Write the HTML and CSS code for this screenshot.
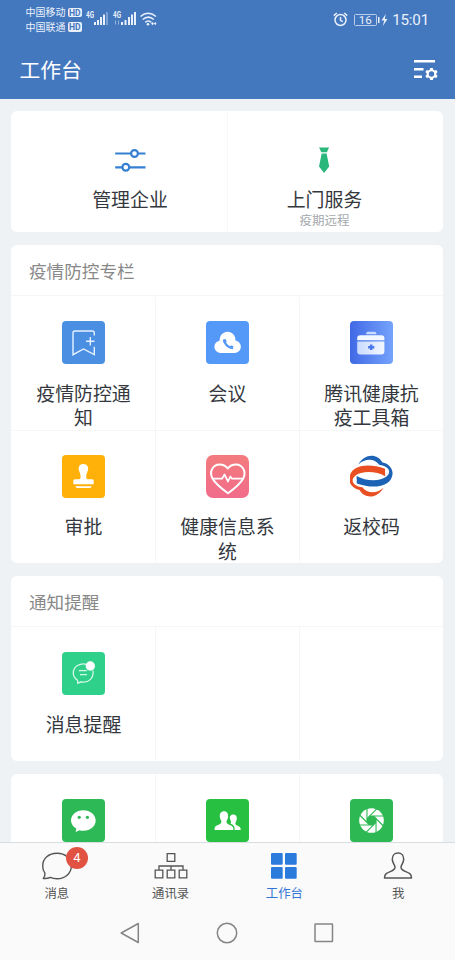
FILE: index.html
```html
<!DOCTYPE html>
<html lang="zh-CN">
<head>
<meta charset="utf-8">
<title>工作台</title>
<link rel="stylesheet" href="styles.css">
</head>
<body>
<div class="app">
  <header class="top">
    <div class="status">
      <div class="carriers">
        <div class="carrier">中国移动<span class="hd">HD</span></div>
        <div class="carrier">中国联通<span class="hd">HD</span></div>
      </div>
      <svg class="signals" width="74" height="20" viewBox="0 0 74 20" fill="#e9f0fb">
        <text class="net" x="0" y="10" textLength="8" lengthAdjust="spacingAndGlyphs">4G</text>
        <path d="M8 14h2v3H8zM11 12h2v5h-2zM14 9h2v8h-2zM17 6.500h2v10.500h-2z"/>
        <path opacity=".35" d="M20 4h2v13h-2z"/>
        <text class="net" x="27" y="10" textLength="8" lengthAdjust="spacingAndGlyphs">4G</text>
        <path opacity=".5" d="M29 12.500h1v4h-1zM32 12.500h1v4h-1z"/>
        <path d="M35 14h2v3h-2zM38.500 12h2v5h-2zM42 9h2v8h-2zM45 6.500h2v10.500h-2zM48 4h2v13h-2z"/>
        <g fill="none" stroke="#e9f0fb" stroke-width="1.600"><path d="M54.500 8.500q7.500-6.500 15.500 0M56.800 11.500q5.400-4.800 11 0M59.300 14.300q3-2.600 6 0"/></g>
        <circle cx="62" cy="16.300" r="1.300"/><path d="M65 15.500l1.500-1.500 1.500 1.500-1.500 1.700zM68 15.500l1.200-1.500 1.300 1.500-1.300 1.700z"/>
      </svg>
      <div class="status-right">
        <svg width="15" height="15" viewBox="0 0 15 15" fill="none" stroke="#e9f0fb" stroke-width="1.500"><circle cx="7.500" cy="8" r="5.500"/><path d="M7.500 5v3.300l2.300 1.400M.8 3.600L3.800 1M14.200 3.600L11.200 1"/></svg>
        <span class="battery">16</span>
        <svg class="bolt" width="10" height="12" viewBox="0 0 10 12" fill="#e9f0fb"><path d="M0 3h1.500v6H0zM7.700 0L3.500 6.500h2.700L4.800 12 9.500 5H6.800z"/></svg>
        <span class="clock">15:01</span>
      </div>
    </div>
    <div class="titlebar">
      <h1>工作台</h1>
      <svg class="manage" width="24" height="20" viewBox="0 0 24 20"><path d="M0 0h21v2.600H0zM0 8h9.500v2.600H0zM0 15.500h8v2.600H0z" fill="#fff"/><path d="M16.200 8h2.600l.5 1.800 1.200.6 1.800-.5 1.300 2.200-1.300 1.400v1l1.300 1.400-1.300 2.200-1.800-.5-1.200.7-.5 1.700h-2.600l-.5-1.700-1.200-.7-1.800.5-1.300-2.200 1.300-1.400v-1l-1.300-1.400 1.300-2.200 1.800.5 1.200-.6zM17.500 11.300a2.700 2.700 0 1 0 0 5.400 2.700 2.700 0 0 0 0-5.400z" fill="#fff" fill-rule="evenodd"/></svg>
    </div>
  </header>

  <main class="content">
    <section class="card quick">
      <div class="quick-item">
        <svg width="43" height="43" viewBox="0 0 43 43" fill="none" stroke="#3580d2" stroke-width="2.200"><path d="M6.200 14.500H22M29 14.500h7.500M6.200 28.300H13M20 28.300h16.500"/><circle cx="25.500" cy="14.500" r="3.400"/><circle cx="16.800" cy="28.300" r="3.400"/></svg>
        <div class="label">管理企业</div>
      </div>
      <div class="quick-item">
        <svg width="43" height="43" viewBox="0 0 43 43" fill="#2ab77c"><path d="M16.100 8.500h10l-2.200 4.700h-5.600zM18.700 14.500h4.900l2.600 13-5.100 6.500L16 27.500z"/></svg>
        <div class="label">上门服务</div>
        <div class="sub">疫期远程</div>
      </div>
    </section>

    <section class="card">
      <h2>疫情防控专栏</h2>
      <div class="grid">
        <div class="cell">
          <div class="icon blue"><svg viewBox="0 0 43 43" fill="none" stroke="#e8f2ff" stroke-width="1.400"><path d="M32.300 14.500V12q0-2-2-2H13q-2 0-2 2v21.700l10.500-5.700 10.800 5.700v-8M28.300 16v8.500M24 20.300h8.500"/></svg></div>
          <div class="label">疫情防控通知</div>
        </div>
        <div class="cell">
          <div class="icon sky"><svg viewBox="0 0 43 43"><path d="M14 32a6.200 6.200 0 0 1-.4-12.300C13.500 14.500 17 10.700 21.600 10.700s8 3.800 7.900 8.800A6.300 6.300 0 0 1 29.200 32z" fill="#fff"/><path d="M18 18.700c.4 4.300 4 8 9 8.300" fill="none" stroke="#5599f8" stroke-width="2.300"/><path d="M18.300 18.600l.9 2.600M24.300 25.700l2.700 1.100" fill="none" stroke="#5599f8" stroke-width="3.200"/></svg></div>
          <div class="label">会议</div>
        </div>
        <div class="cell">
          <div class="icon kit"><svg viewBox="0 0 43 43"><defs><linearGradient id="kit"><stop stop-color="#c9dbff"/><stop offset="1" stop-color="#f3f7ff"/></linearGradient></defs><path d="M16.300 13.200v-1q0-1.500 1.500-1.500h7q1.500 0 1.500 1.500v1z" fill="#c9dbff"/><path d="M7.200 19.300v-2q0-3 3-3h21.200q3 0 3 3v2z" fill="#f3f7ff"/><path d="M7.200 20.500h27.200v10q0 3-3 3H10.200q-3 0-3-3z" fill="url(#kit)"/><path d="M20 23.500h2.400V25h1.900v2.400h-1.900V29H20v-1.600h-1.900V25H20z" fill="#4a78ec"/></svg></div>
          <div class="label">腾讯健康抗疫工具箱</div>
        </div>
        <div class="cell">
          <div class="icon amber"><svg viewBox="0 0 43 43" fill="#fff"><path d="M21.300 9c2.900 0 4.900 1.900 4.900 4.500 0 3-2.300 5-2 8.500.1 1.300.6 2.300 1.500 2.300h4.500q1.500 0 1.500 1.500v3.500H11.300v-3.500q0-1.500 1.500-1.500h4.300c.9 0 1.400-1 1.500-2.300.3-3.500-2-5.500-2-8.500 0-2.600 1.800-4.500 4.700-4.500zM13.300 31.200h16.500q-.5 1.800-2 1.800H15.300q-1.500 0-2-1.800z"/></svg></div>
          <div class="label">审批</div>
        </div>
        <div class="cell">
          <div class="icon pink"><svg viewBox="0 0 43 43" fill="none" stroke="#fff" stroke-width="2" stroke-linejoin="round"><path d="M22 38.300C17.500 35 9.500 29 6.500 23.500 2.500 16 7.500 9.500 13.500 9.500c3.500 0 6.500 1.700 8.300 4 1.700-2.300 4.700-4 8.200-4 6 0 11 6.500 7.200 14C34.200 29 26.500 35 22 38.300z"/><path d="M6.500 23.700H16l2.500-4.200 3.500 7 2.400-5 1.600 2.200h11.200" stroke-width="1.700"/></svg></div>
          <div class="label">健康信息系统</div>
        </div>
        <div class="cell">
          <div class="icon"><svg viewBox="0 0 43 43"><defs><path id="swirl" d="M8.300 9.500C14-1.500 27.500-2 32.200 7.200 40.500 9 44.500 16 41.700 22.500 38 32.300 22.500 34 6.800 28.500L6.600 21C16 26.500 30.500 26.500 36.500 21.500 42.500 16.300 37.500 10.800 29.500 10 24.500 3.500 15.500 3 8.300 9.500z"/></defs><use href="#swirl" fill="#1d63b5"/><use href="#swirl" fill="#ea4f22" transform="rotate(180 20.900 21.100)"/></svg></div>
          <div class="label">返校码</div>
        </div>
      </div>
    </section>

    <section class="card">
      <h2>通知提醒</h2>
      <div class="grid">
        <div class="cell">
          <div class="icon mint"><svg viewBox="0 0 43 43" fill="none" stroke="#d5f9e8" stroke-width="1.300"><path d="M25 12.500C18 10.500 11.300 14.500 11.300 21c0 3 1.700 5.600 4.200 7.300l.3 3 3.200-1.500c7.500 1.500 13-3.500 12-11.300M16.800 18.700h8M18 22.700h7"/><circle cx="28.300" cy="14" r="4.700" fill="#fff" stroke="none"/></svg></div>
          <div class="label">消息提醒</div>
        </div>
        <div class="cell"></div>
        <div class="cell"></div>
      </div>
    </section>

    <section class="card">
      <div class="grid">
        <div class="cell">
          <div class="icon wechat"><svg viewBox="0 0 43 43"><path d="M21.300 11.200c7 0 12.400 4.500 12.400 10.300s-5.400 10.300-12.400 10.300c-1.300 0-2.500-.1-3.700-.5L13.700 33l.6-3.500c-3.300-1.900-5.300-4.800-5.300-8 0-5.800 5.400-10.300 12.300-10.300z" fill="#fff"/><circle cx="17.200" cy="18.300" r="1.600" fill="#2eb957"/><circle cx="25.400" cy="18.300" r="1.600" fill="#2eb957"/></svg></div>
        </div>
        <div class="cell">
          <div class="icon green"><svg viewBox="0 0 43 43" fill="#fff"><path d="M18 12.200c3 0 4.300 2.300 4.100 5.300-.2 2.500-1.400 3.700-1.600 5.200-.3 2.800 5.700 3.300 6.500 5.500.3.900.4 1.800.4 2.800H8.500c0-1 .1-1.900.4-2.800.8-2.200 6.800-2.700 6.500-5.500-.2-1.500-1.400-2.700-1.600-5.200-.2-3 1.200-5.300 4.200-5.300z"/><path d="M27.300 15.500c2.600 0 3.700 2 3.500 4.500-.2 2-1.300 3-1.400 4.500-.1 2 4 2.300 4.800 4 .4.800.5 1.600.5 2.500h-6c0-4-1.200-5.300-4.400-6.500 1.600-1 .5-2.300-.3-4.500-.8-2.800 1-4.500 3.300-4.500z"/></svg></div>
        </div>
        <div class="cell">
          <div class="icon moments"><svg viewBox="0 0 43 43"><defs><path id="blade" d="M17 19.600L29 7.600" stroke="#2db853" stroke-width="1.100"/></defs><circle cx="21.500" cy="21.500" r="12.300" fill="#fff"/><path d="M19.600 17h3.800l2.600 2.600v3.800L23.400 26h-3.800L17 23.400v-3.800z" fill="#2db853"/><use href="#blade"/><use href="#blade" transform="rotate(45 21.500 21.500)"/><use href="#blade" transform="rotate(90 21.500 21.500)"/><use href="#blade" transform="rotate(135 21.500 21.500)"/><use href="#blade" transform="rotate(180 21.500 21.500)"/><use href="#blade" transform="rotate(225 21.500 21.500)"/><use href="#blade" transform="rotate(270 21.500 21.500)"/><use href="#blade" transform="rotate(315 21.500 21.500)"/></svg></div>
        </div>
      </div>
    </section>
  </main>

  <nav class="tabs">
    <div class="tab">
      <div class="tab-icon"><svg width="34" height="28" viewBox="0 0 34 28" fill="none" stroke="#555" stroke-width="1.400" stroke-linejoin="round"><path d="M17 1.300C25.300 1.300 31.300 6.500 31.300 14S25 26.700 17 26.700c-2.600 0-4.700-.4-6.500-1.300-2.200 1-4.700 1.300-7.200 1.100 1.300-1.500 1.800-3.400 1.600-5.300C3.500 19.200 2.700 16.700 2.700 14 2.700 6.500 8.700 1.300 17 1.300z"/></svg><span class="badge">4</span></div>
      <div class="tab-label">消息</div>
    </div>
    <div class="tab">
      <div class="tab-icon"><svg width="34" height="28" viewBox="0 0 34 28" fill="none" stroke="#555" stroke-width="1.300"><path d="M13.200 1.700h7.600v7.600h-7.600zM1.200 18.200h7.600v7.600H1.200zM13.200 18.200h7.600v7.600h-7.600zM25.200 18.200h7.600v7.600h-7.600zM5 18.200V14h24v4.200M17 14v4.200"/></svg></div>
      <div class="tab-label">通讯录</div>
    </div>
    <div class="tab active">
      <div class="tab-icon"><svg width="34" height="28" viewBox="0 0 34 28" fill="#2b7bdc"><rect x="4" y="1" width="11.700" height="11.700" rx="1"/><rect x="18" y="1" width="11.700" height="11.700" rx="1"/><rect x="4" y="15" width="11.700" height="11.700" rx="1"/><rect x="18" y="15" width="11.700" height="11.700" rx="1"/></svg></div>
      <div class="tab-label">工作台</div>
    </div>
    <div class="tab">
      <div class="tab-icon"><svg width="34" height="28" viewBox="0 0 34 28" fill="none" stroke="#555" stroke-width="1.500" stroke-linejoin="round"><path d="M17 1c3.500 0 5.700 2.600 5.700 6.200 0 3.800-2.500 5.500-2.700 8-.2 3.500 5.500 4 8.800 6.500 1.400 1.100 1.700 2.500 1.700 4.300h-27c0-1.800.3-3.200 1.700-4.300 3.300-2.500 9-3 8.800-6.500-.2-2.500-2.700-4.200-2.700-8C11.300 3.600 13.500 1 17 1z"/></svg></div>
      <div class="tab-label">我</div>
    </div>
  </nav>

  <footer class="sysnav">
    <svg width="22" height="22" viewBox="0 0 22 22"><path d="M19.300 1.500v19L2.200 11z"/></svg>
    <svg width="22" height="22" viewBox="0 0 22 22"><circle cx="11" cy="11" r="9.700"/></svg>
    <svg width="22" height="22" viewBox="0 0 22 22"><rect x="2" y="2" width="17.500" height="17.500" rx=".5"/></svg>
  </footer>
</div>
</body>
</html>
```
FILE: styles.css
```css
* { box-sizing: border-box; }
body {
  margin: 0;
  background: #eff2f5;
  color: #34383e;
  font-family: "Noto Sans CJK SC", sans-serif;
}
svg { display: block; flex: none; }
h1, h2 { margin: 0; font-weight: 400; }

.app { display: flex; flex-direction: column; width: 455px; height: 960px; overflow: hidden; }

/* Header */
.top { height: 98.500px; flex: none; background: #4478be; color: #fff; }
.status { display: flex; height: 39px; padding: 5px 26px 0 25.500px; color: #e9f0fb; }
.carrier { display: flex; align-items: center; height: 14.500px; font-size: 10px; line-height: 14.500px; white-space: nowrap; }
.hd {
  width: 13.500px; height: 9.500px; margin-left: 2.500px; border-radius: 2px;
  background: #e9f0fb; color: #4478be;
  font: 700 8.500px/10px Roboto, sans-serif; text-align: center;
}
.signals { margin: 3px 0 0 4px; }
.net { font: 700 9px Roboto, sans-serif; }
.status-right { display: flex; align-items: center; height: 29px; margin-left: auto; }
.battery {
  width: 23px; height: 12px; margin-left: 5.500px;
  border: 1px solid #b9cdeb; border-radius: 1.500px;
  font: 11.500px/11px Roboto, sans-serif; text-align: center;
}
.bolt { margin-left: 1.500px; }
.clock { margin-left: 4px; font: 15.200px/20px Roboto, sans-serif; letter-spacing: -.2px; }
.titlebar { display: flex; justify-content: space-between; align-items: center; height: 59px; padding: 0 17px 0 19.500px; }
.manage { margin-top: 2px; }
h1 { font-size: 20.800px; line-height: 30px; }

/* Cards */
.content { display: flex; flex-direction: column; flex: 1; gap: 13px; min-height: 0; padding: 12.500px 12px 0 11px; overflow: hidden; }
.card { flex: none; overflow: hidden; border-radius: 6px; background: #fff; }
.card h2 { height: 51px; padding-left: 18px; border-bottom: 1px solid #f5f6f8; color: #888; font-size: 17.600px; line-height: 51px; }
.quick { display: grid; grid-template-columns: 1fr 1fr; height: 121px; }
.quick-item { display: flex; flex-direction: column; align-items: center; padding: 27.500px 0 0 22px; }
.quick-item + .quick-item { padding: 27.500px 22px 0 0; border-left: 1px solid #f7f8fa; }
.quick-item .label { margin-top: 5px; }
.label { max-width: 100px; font-size: 18.900px; line-height: 24.500px; text-align: center; }
.sub { color: #a5a8ad; font-size: 12.500px; line-height: 17px; }

.grid { display: grid; grid-template-columns: repeat(3, 1fr); grid-auto-rows: 133.600px; }
.cell { display: flex; flex-direction: column; align-items: center; padding-top: 24.200px; border-left: 1px solid #f5f6f8; border-top: 1px solid #f5f6f8; }
.cell:nth-child(3n+1) { border-left-color: transparent; }
.cell:nth-child(-n+3) { border-top-color: transparent; }
.cell .label { margin-top: 16.500px; }
.icon { flex: none; width: 43px; height: 43px; border-radius: 4px; overflow: hidden; }
.blue { background: #4b8fe3; }
.sky { background: #5599f8; }
.kit { background: linear-gradient(90deg, #4069e5, #75a3fc); }
.amber { background: #ffb10a; }
.pink { border-radius: 7px; background: linear-gradient(#f37b7d, #f16c8a); }
.mint { background: #2ed08a; }
.wechat { background: #2eb957; }
.green { background: #28c040; }
.moments { background: #2db853; }

/* Bottom bars */
.tabs { display: flex; flex: none; height: 62px; border-top: 1px solid #d9dde2; background: #fafafa; color: #555; }
.tab { display: flex; flex: 1; flex-direction: column; align-items: center; padding-top: 9px; }
.tab-icon { position: relative; }
.badge {
  position: absolute; left: 26px; top: -5px; width: 22px; height: 22px; border-radius: 50%;
  background: #e25243; color: #fff; font: 13px/22px Roboto, sans-serif; text-align: center;
}
.tab-label { margin-top: 3px; font-size: 12.400px; line-height: 20px; }
.active { color: #3474d4; }
.sysnav { display: flex; flex: none; justify-content: center; gap: 75px; height: 56px; padding: 17.500px 1px 0 0; background: #fafafa; }
.sysnav svg { fill: none; stroke: #858585; stroke-width: 1.500; stroke-linejoin: round; }
```
